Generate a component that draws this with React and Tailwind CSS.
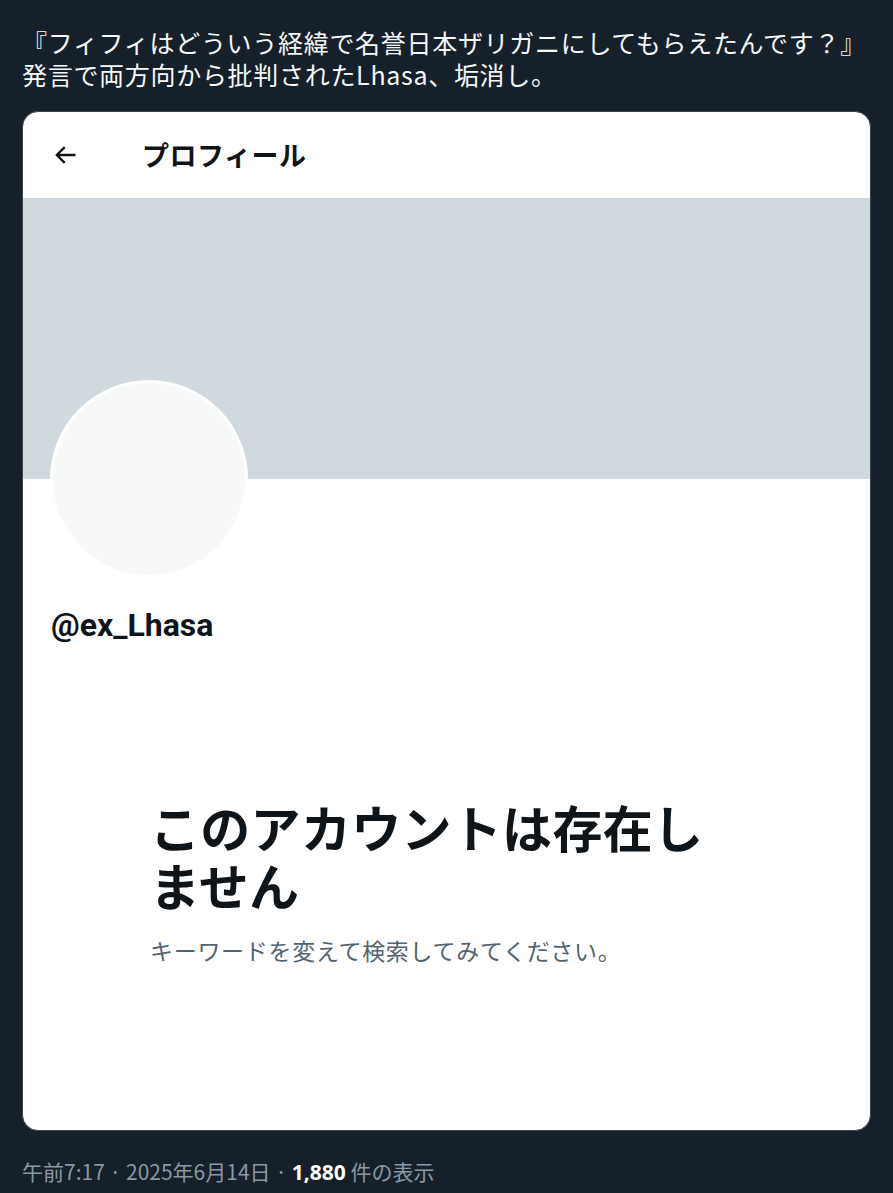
export default function App() {
  return (
    <div
      className="min-h-[1193px] w-full bg-[#16202a] text-white"
      style={{ fontFamily: '"Noto Sans CJK JP", "Noto Sans", sans-serif' }}
    >
      <div className="px-[22px] pt-[26px]">
        <p className="whitespace-nowrap text-[25px] leading-[32px] tracking-[0.7px] text-[#f7f9f9]">
          『フィフィはどういう経緯で名誉日本ザリガニにしてもらえたんです？』
          <br />
          発言で両方向から批判されたLhasa、垢消し。
        </p>

        {/* screenshot card */}
        <div className="mt-[21px] w-[849px] h-[1020px] overflow-hidden rounded-[16px] border border-[#3a4550] bg-white text-[#0f1419]">
          <div className="flex h-[86px] items-center pl-[28px]">
            <svg width="28" height="28" viewBox="0 0 24 24" className="text-[#0f1419]">
              <path
                d="M7.414 13l5.043 5.04-1.414 1.42L3.586 12l7.457-7.46 1.414 1.42L7.414 11H21v2H7.414z"
                fill="currentColor"
              />
            </svg>
            <span className="ml-[63px] text-[27px] font-bold tracking-[0.5px]">プロフィール</span>
          </div>
          <div className="h-[281px] bg-[#cfd9de]" />
          <div className="relative px-[28px]">
            <div className="absolute left-[27px] top-[-99px] h-[198px] w-[198px] rounded-full border-[3px] border-white bg-[#f7f9f9]" />
            <div className="pt-[126px]">
              <p
                className="text-[32px] font-bold leading-[40px]"
                style={{ fontFamily: 'Roboto, "Noto Sans", sans-serif' }}
              >
                @ex_Lhasa
              </p>
            </div>
            <div className="pl-[99px] pt-[152px]">
              <p className="w-[570px] text-[50px] font-bold leading-[58px] tracking-[0.3px]">
                このアカウントは存在しません
              </p>
              <p className="mt-[22px] text-[23px] leading-[30px] tracking-[0.7px] text-[#536471]">
                キーワードを変えて検索してみてください。
              </p>
            </div>
          </div>
        </div>

        <p className="mt-[26px] text-[21px] leading-[28px] text-[#8b98a5]">
          午前7:17 · 2025年6月14日 ·{" "}
          <span className="font-bold text-white" style={{ fontFamily: '"Open Sans", sans-serif' }}>
            1,880
          </span>{" "}
          件の表示
        </p>
      </div>
    </div>
  );
}
